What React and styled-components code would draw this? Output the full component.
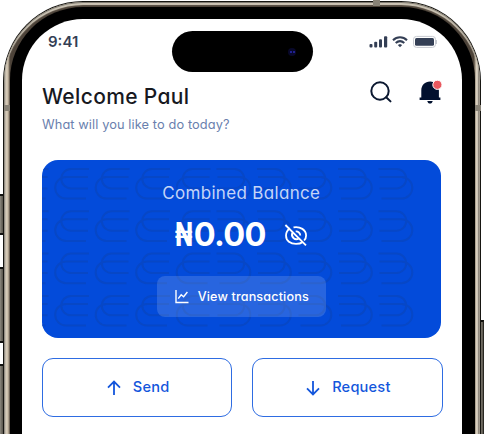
import React from 'react';
import styled, { createGlobalStyle } from 'styled-components';

const GlobalStyle = createGlobalStyle`
  * {
    box-sizing: border-box;
  }

  body {
    margin: 0;
    background: #fff;
    overflow: hidden;
    font-family: Inter, 'Open Sans', sans-serif;
    font-feature-settings: 'cv11';
  }
`;

const Stage = styled.div`
  position: relative;
  width: 485px;
  height: 434px;
  overflow: hidden;
`;

const SideKey = styled.div`
  position: absolute;
  left: ${(p) => p.$left}px;
  top: ${(p) => p.$top}px;
  width: 6px;
  height: ${(p) => p.$height}px;
  border: 1px solid #292722;
  border-top: 2px solid #11110f;
  border-bottom: 2px solid #11110f;
  background: linear-gradient(90deg, #aaa699, #77736a 50%, #5b574e);
`;

const Frame = styled.div`
  position: absolute;
  left: 3px;
  top: 1px;
  width: 478px;
  height: 700px;
  padding: 1px;
  border-radius: 80px;
  background: #171612;
`;

const Metal = styled.div`
  height: 100%;
  padding: 5px 5px 5px 6px;
  border-radius: 79px;
  background: linear-gradient(90deg, #77736a 0, #d9cfbe 2px, #c9bba6 4px, #4d4339 6px, #4d4339 470px, #9a8e7c 471px, #eee5d4 473px, #706a61 475px, #cfc7b8 476px);
  box-shadow: inset 0 1px 1px #77736a, inset 0 3px 1px #d6cebe;
`;

const Bezel = styled.div`
  height: 100%;
  padding: 12px 13px 12px 12px;
  border-radius: 73px;
  background: #000;
`;

const Screen = styled.div`
  height: 100%;
  padding: 0 20px;
  border-radius: 61px;
  background: #fff;
`;

const Band = styled.div`
  position: absolute;
  left: ${(p) => p.$left}px;
  top: ${(p) => p.$top}px;
  width: ${(p) => p.$width || 6}px;
  height: 6px;
  background: #888276;
`;

const Island = styled.div`
  position: absolute;
  left: 172px;
  top: 31px;
  display: flex;
  align-items: center;
  justify-content: flex-end;
  width: 141px;
  height: 41px;
  padding-right: 17px;
  border-radius: 21px;
  background: #000;
`;

const Lens = styled.div`
  display: flex;
  align-items: center;
  justify-content: center;
  gap: 1px;
  width: 8px;
  height: 8px;
  border-radius: 50%;
  background: #08082a;

  &::before,
  &::after {
    content: '';
    width: 2px;
    height: 2px;
    background: #202090;
  }
`;

const StatusBar = styled.div`
  display: flex;
  align-items: flex-start;
  justify-content: space-between;
  height: 46px;
  padding: 15px 5px 0 6px;
`;

const Text = styled.span`
  white-space: nowrap;
  line-height: ${(p) => p.$line || p.$size}px;
  font-size: ${(p) => p.$size}px;
  font-weight: ${(p) => p.$weight || 400};
  letter-spacing: ${(p) => p.$track || 0}px;
  color: ${(p) => p.$color || '#fff'};
`;

const Header = styled.header`
  display: flex;
  justify-content: space-between;
  height: 95px;
`;

const Greeting = styled.div`
  display: flex;
  flex-direction: column;
  gap: 6px;
  padding-top: 19px;
`;

const HeaderIcons = styled.div`
  display: flex;
  align-items: center;
  gap: 23px;
  height: 26px;
  margin: 14px -2px 0 0;
`;

const Card = styled.section`
  position: relative;
  width: 398.5px;
  height: 177.5px;
  border-radius: 16px;
  background: #034bda;
  overflow: hidden;
`;

const Pattern = styled.svg`
  position: absolute;
  inset: 0;
`;

const CardBody = styled.div`
  position: relative;
  display: flex;
  flex-direction: column;
  align-items: center;
  padding-top: 23px;
`;

const Balance = styled.div`
  display: flex;
  align-items: center;
  height: 36px;
  margin-top: 14px;

  svg {
    margin-left: 17px;
  }
`;

/* Condensed so the sign is no wider than a digit */
const Naira = styled.span`
  width: 19px;
  font-size: 32px;
  font-weight: 800;
  line-height: 32px;
  color: #fff;
  transform: scaleX(0.72);
  transform-origin: left;
`;

const ViewButton = styled.button`
  display: flex;
  align-items: center;
  justify-content: center;
  gap: 9px;
  width: 169px;
  height: 41px;
  margin-top: 23px;
  padding: 1px 0 0 1px;
  border: 0;
  border-radius: 8px;
  background: rgba(255, 255, 255, 0.15);
  font-family: inherit;
  font-feature-settings: inherit;
`;

const Actions = styled.div`
  display: flex;
  gap: 20px;
  width: 400.5px;
  margin-top: 20.5px;
`;

const ActionButton = styled.button`
  display: flex;
  flex: 1;
  align-items: center;
  justify-content: center;
  gap: 12px;
  height: 59px;
  padding: 0 0 0 2px;
  border: 1px solid #2e6ce2;
  border-radius: 11px;
  background: #fff;
  font-family: inherit;
  font-feature-settings: inherit;
`;

const StatusIcons = () => (
  <svg width="69" height="14" viewBox="368 34 69 14">
    <g fill="#343f55">
      <rect x="369.5" y="44" width="3" height="3.6" rx="1" />
      <rect x="374.2" y="41.8" width="3" height="5.8" rx="1" />
      <rect x="379" y="39.2" width="3" height="8.4" rx="1" />
      <rect x="384" y="36.3" width="3.2" height="11.3" rx="1" />
      <path d="m397.8 44.9 2.2-1 2.2 1-2.2 2.4z" />
      <rect x="415" y="38" width="19" height="7.8" rx="1.5" />
    </g>
    <g fill="none" stroke="#343f55" strokeWidth="2">
      <path d="M393 40.2c4-4 10-4 14 0M395.7 43.1c2.6-2.4 6-2.4 8.6 0" />
    </g>
    <rect x="413.5" y="36.4" width="22" height="11" rx="3" fill="none" stroke="#c7cad0" />
    <path d="M436.5 40v4" stroke="#c7cad0" strokeWidth="1.5" />
  </svg>
);

const SearchIcon = () => (
  <svg width="23" height="23" viewBox="370 81 23 23" fill="none" stroke="#0b1830" strokeWidth="2">
    <circle cx="380" cy="91" r="8.7" />
    <path d="m386.2 97.2 4.3 4.2" strokeLinecap="round" />
  </svg>
);

const BellIcon = () => (
  <svg width="28" height="26" viewBox="416 79 28 26">
    <path d="M421.3 97.6v-7c0-5.2 3.6-9 8.8-9s8.8 3.8 8.8 9v7h1.5v2.5h-20.8v-2.5zM427.3 101h5.4c-.5 3.4-4.9 3.4-5.4 0z" fill="#02112f" />
    <circle cx="437.4" cy="84.8" r="4.6" fill="#e9585e" stroke="#fff" />
  </svg>
);

const EyeOffIcon = () => (
  <svg width="25" height="24" viewBox="283 223 25 24" fill="none" stroke="#fff" strokeWidth="1.8">
    <path d="M289.8 228.2c-2 1.7-3.8 4.6-3.8 7.2 0 5.4 4.5 8.5 10 8.5 2.7 0 5.1-.7 6.9-2M293.5 227.3c6.7-1.3 12.6 2.8 12.6 8.1 0 2-.7 3.7-2 5.1M292.5 232.6c-2.1 4 2.5 8.4 6.3 5.8M295.7 231.4c2.4-.2 4.6 1.7 4.6 4" />
    <path d="m285.4 225 20.6 20.3" />
  </svg>
);

const ChartIcon = () => (
  <svg width="14" height="14" viewBox="0 0 14 14" fill="none" stroke="#fff" strokeWidth="1.4">
    <path d="M1 0v12.5h12.5M3.2 8.6l3-3.8 2.4 2L12.4 2" />
  </svg>
);

const ArrowIcon = ({ down }) => (
  <svg width="14" height="16" viewBox="0 0 14 16" fill="none" stroke="#1356dc" strokeWidth="1.8">
    <path d={down ? 'M7 1v13M1 8.4l6 6 6-6' : 'M7 15V2M1 7.6l6-6 6 6'} />
  </svg>
);

const rows = [0, 1, 2, 3];
const leftCols = [-1, 0, 1, 2, 3];
const rightCols = [0, 1, 2, 3, 4];

const CardPattern = () => (
  <Pattern width="399" height="178" fill="none" stroke="#0747c6" strokeWidth="2">
    <defs>
      <path id="loop" d="M35 .5H17a9.7 9.7 0 0 0 0 19.4H34M34 8.5H12a10.8 10.8 0 0 0 0 21.6H32" />
    </defs>
    {rows.map((row) => (
      <g key={row}>
        {leftCols.map((col) => (
          <use key={col} href="#loop" x={12 + col * 40.5} y={8.5 + row * 42.3} />
        ))}
        {rightCols.map((col) => (
          <use key={col} href="#loop" transform={`translate(${209.5 + col * 40.5} ${8.5 + row * 42.3}) scale(-1 1)`} />
        ))}
      </g>
    ))}
  </Pattern>
);

const App = () => (
  <Stage>
    <GlobalStyle />
    <SideKey $left={-2} $top={194} $height={41} />
    <SideKey $left={-2} $top={267} $height={76} />
    <SideKey $left={-2} $top={364} $height={76} />
    <SideKey $left={478} $top={320} $height={130} />
    <Frame>
      <Metal>
        <Bezel>
          <Screen>
            <StatusBar>
              <Text $size={15} $weight={600} $color="#343f55">9:41</Text>
              <StatusIcons />
            </StatusBar>
            <Header>
              <Greeting>
                <Text $size={21} $line={26} $weight={500} $track={0.35} $color="#17191f">Welcome Paul</Text>
                <Text $size={12.8} $line={18} $track={0.1} $color="#6a7fae">What will you like to do today?</Text>
              </Greeting>
              <HeaderIcons>
                <SearchIcon />
                <BellIcon />
              </HeaderIcons>
            </Header>
            <Card>
              <CardPattern />
              <CardBody>
                <Text $size={17} $line={20} $track={0.32} $color="#c5d5f7">Combined Balance</Text>
                <Balance>
                  <Naira>₦</Naira>
                  <Text $size={32.5} $weight={700} $track={-0.7}>0.00</Text>
                  <EyeOffIcon />
                </Balance>
                <ViewButton>
                  <ChartIcon />
                  <Text $size={12.6} $weight={500} $track={0.15}>View transactions</Text>
                </ViewButton>
              </CardBody>
            </Card>
            <Actions>
              <ActionButton>
                <ArrowIcon />
                <Text $size={14.6} $weight={500} $track={0.2} $color="#1356dc">Send</Text>
              </ActionButton>
              <ActionButton>
                <ArrowIcon down />
                <Text $size={14.6} $weight={500} $track={0.2} $color="#1356dc">Request</Text>
              </ActionButton>
            </Actions>
          </Screen>
        </Bezel>
      </Metal>
    </Frame>
    <Band $left={4} $top={105} />
    <Band $left={475} $top={105} />
    <Band $left={373} $top={0} $width={7} />
    <Island>
      <Lens />
    </Island>
  </Stage>
);

export default App;
